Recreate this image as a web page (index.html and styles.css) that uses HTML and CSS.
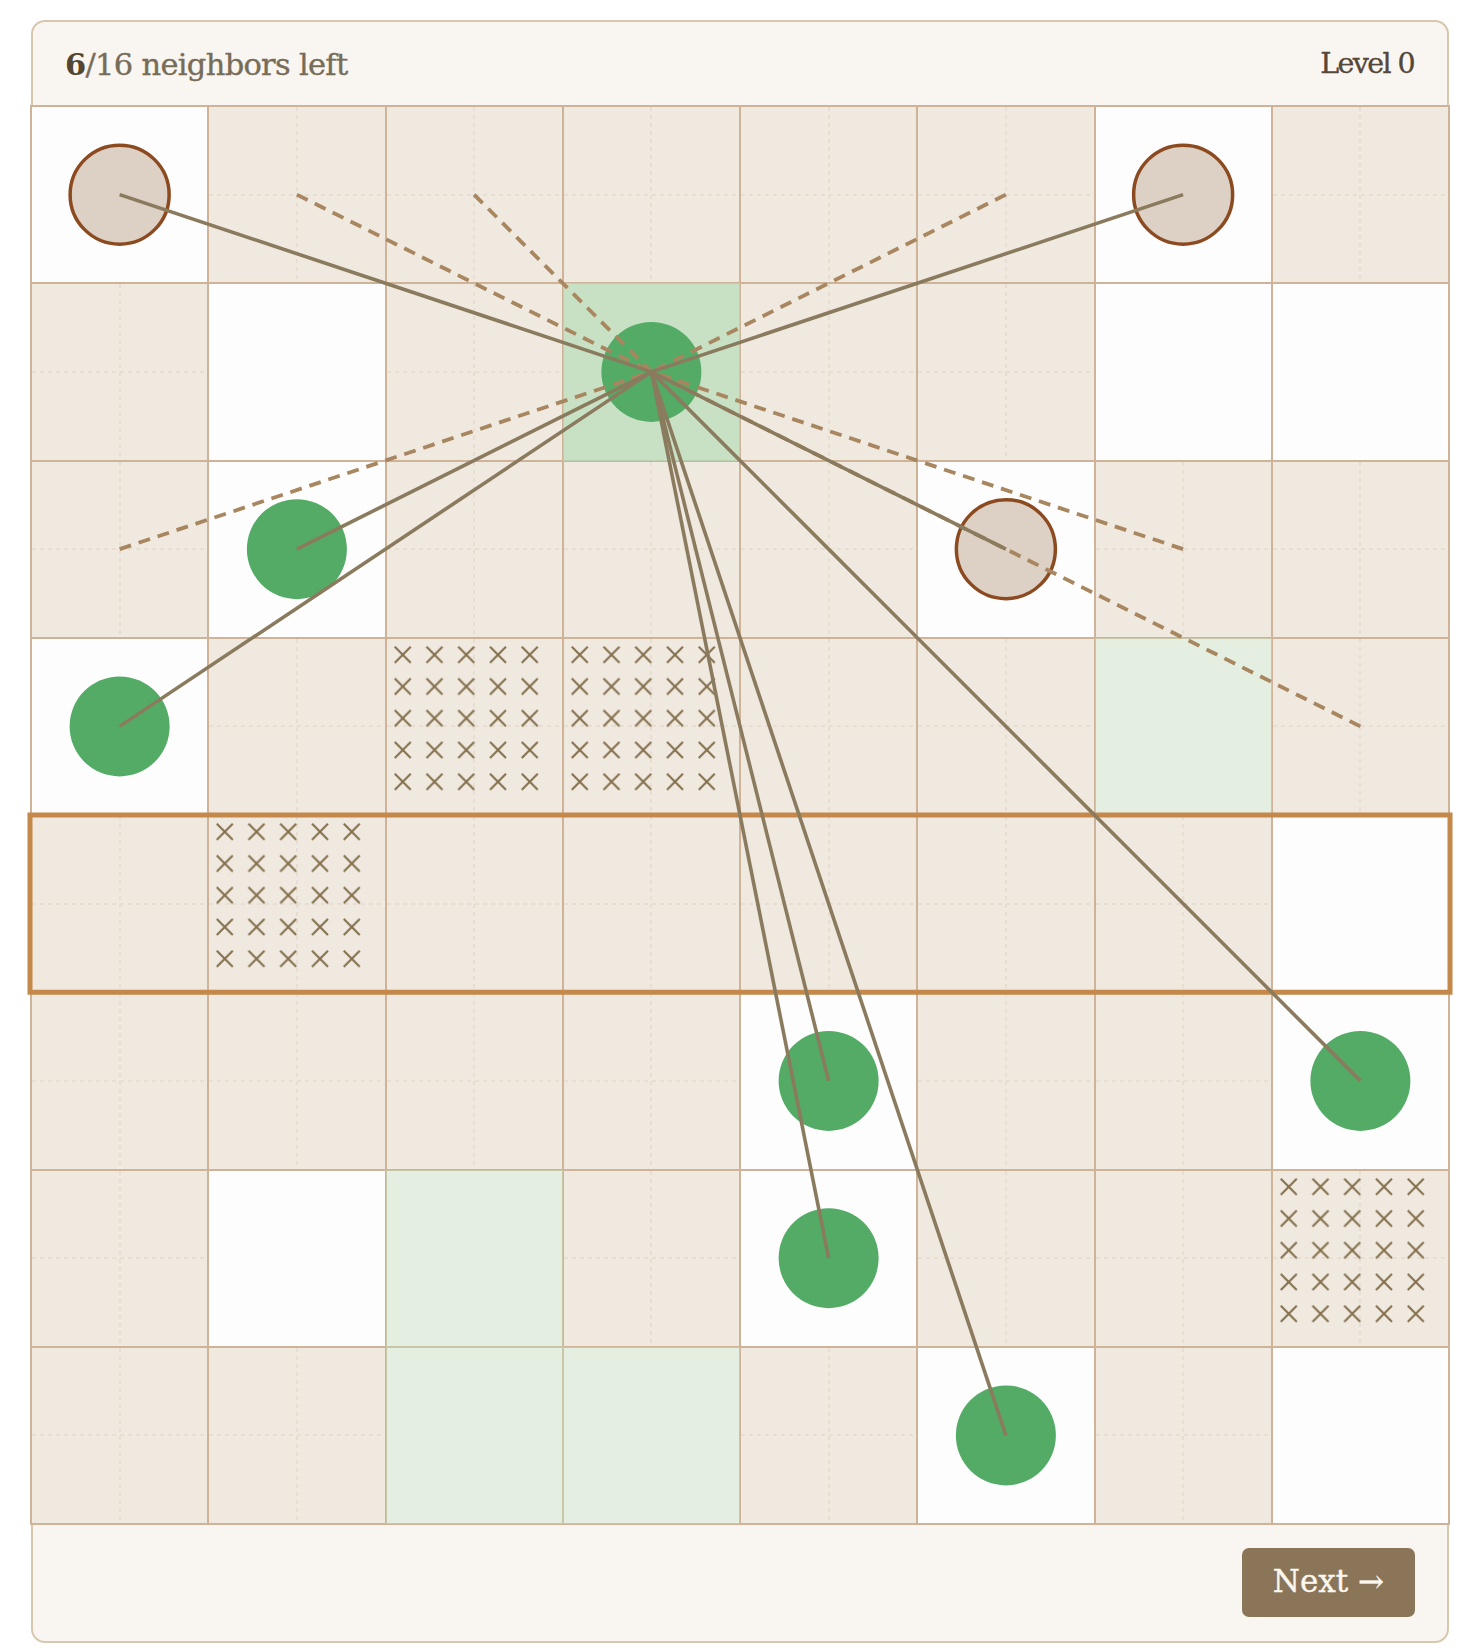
FILE: index.html
```html
<!DOCTYPE html>
<html lang="en">
<head>
<meta charset="utf-8">
<title>Neighbors</title>
<link rel="stylesheet" href="styles.css">
</head>
<body>
<svg class="defs" width="0" height="0" aria-hidden="true">
  <defs>
    <pattern id="xmark" patternUnits="userSpaceOnUse" width="31.75" height="31.75">
      <path d="M7.75 7.75 L23.75 23.75 M23.75 7.75 L7.75 23.75" stroke="#84704d" stroke-width="2.1" fill="none"/>
    </pattern>
  </defs>
</svg>
<main class="card">
  <header class="card-head">
    <div class="count"><b>6</b>/16 neighbors left</div>
    <div class="level">Level 0</div>
  </header>
  <div class="board">
    <!-- row 0 -->
    <div class="cell w"></div><div class="cell b"></div><div class="cell b"></div><div class="cell b"></div><div class="cell b"></div><div class="cell b"></div><div class="cell w"></div><div class="cell b"></div>
    <!-- row 1 -->
    <div class="cell b"></div><div class="cell w"></div><div class="cell b"></div><div class="cell g"></div><div class="cell b"></div><div class="cell b"></div><div class="cell w"></div><div class="cell w"></div>
    <!-- row 2 -->
    <div class="cell b"></div><div class="cell w"></div><div class="cell b"></div><div class="cell b"></div><div class="cell b"></div><div class="cell w"></div><div class="cell b"></div><div class="cell b"></div>
    <!-- row 3 -->
    <div class="cell w"></div><div class="cell b"></div>
    <div class="cell b x"><svg class="xs" width="160" height="160"><rect width="158.75" height="158.75" fill="url(#xmark)"/></svg></div>
    <div class="cell b x"><svg class="xs" width="160" height="160"><rect width="158.75" height="158.75" fill="url(#xmark)"/></svg></div>
    <div class="cell b"></div><div class="cell b"></div><div class="cell lg"></div><div class="cell b"></div>
    <!-- row 4 -->
    <div class="cell b"></div>
    <div class="cell b x"><svg class="xs" width="160" height="160"><rect width="158.75" height="158.75" fill="url(#xmark)"/></svg></div>
    <div class="cell b"></div><div class="cell b"></div><div class="cell b"></div><div class="cell b"></div><div class="cell b"></div><div class="cell w"></div>
    <!-- row 5 -->
    <div class="cell b"></div><div class="cell b"></div><div class="cell b"></div><div class="cell b"></div><div class="cell w"></div><div class="cell b"></div><div class="cell b"></div><div class="cell w"></div>
    <!-- row 6 -->
    <div class="cell b"></div><div class="cell w"></div><div class="cell lg"></div><div class="cell b"></div><div class="cell w"></div><div class="cell b"></div><div class="cell b"></div>
    <div class="cell b x"><svg class="xs" width="160" height="160"><rect width="158.75" height="158.75" fill="url(#xmark)"/></svg></div>
    <!-- row 7 -->
    <div class="cell b"></div><div class="cell b"></div><div class="cell lg"></div><div class="cell lg"></div><div class="cell b"></div><div class="cell w"></div><div class="cell b"></div><div class="cell w"></div>

    <svg class="overlay" viewBox="0 0 1418 1418" width="1418" height="1418">
      <rect class="hl" x="-1" y="709" width="1420" height="177.25"/>
      <g class="nb-off">
        <circle cx="88.625" cy="88.625" r="49.5"/>
        <circle cx="1152.125" cy="88.625" r="49.5"/>
        <circle cx="974.875" cy="443.125" r="49.5"/>
      </g>
      <g class="nb-on">
        <circle cx="620.375" cy="265.875" r="50"/>
        <circle cx="265.875" cy="443.125" r="50"/>
        <circle cx="88.625" cy="620.375" r="50"/>
        <circle cx="797.625" cy="974.875" r="50"/>
        <circle cx="797.625" cy="1152.125" r="50"/>
        <circle cx="974.875" cy="1329.375" r="50"/>
        <circle cx="1329.375" cy="974.875" r="50"/>
      </g>
      <g class="dash">
        <line x1="265.875" y1="88.625" x2="620.375" y2="265.875"/>
        <line x1="443.125" y1="88.625" x2="620.375" y2="265.875"/>
        <line x1="974.875" y1="88.625" x2="620.375" y2="265.875"/>
        <line x1="88.625" y1="443.125" x2="620.375" y2="265.875"/>
        <line x1="1152.125" y1="443.125" x2="620.375" y2="265.875"/>
        <line x1="1329.375" y1="620.375" x2="620.375" y2="265.875"/>
      </g>
      <g class="solid">
        <line x1="620.375" y1="265.875" x2="88.625" y2="88.625"/>
        <line x1="620.375" y1="265.875" x2="1152.125" y2="88.625"/>
        <line x1="620.375" y1="265.875" x2="974.875" y2="443.125"/>
        <line x1="620.375" y1="265.875" x2="265.875" y2="443.125"/>
        <line x1="620.375" y1="265.875" x2="88.625" y2="620.375"/>
        <line x1="620.375" y1="265.875" x2="797.625" y2="974.875"/>
        <line x1="620.375" y1="265.875" x2="797.625" y2="1152.125"/>
        <line x1="620.375" y1="265.875" x2="974.875" y2="1329.375"/>
        <line x1="620.375" y1="265.875" x2="1329.375" y2="974.875"/>
      </g>
    </svg>
  </div>
  <footer class="card-foot">
    <button class="next" type="button">Next →</button>
  </footer>
</main>
</body>
</html>
```

FILE: styles.css
```css
html, body {
  margin: 0;
  background: #ffffff;
}

body {
  padding: 20px 31px;
  font-family: "DejaVu Serif", "Liberation Serif", serif;
}

.defs {
  position: absolute;
  width: 0;
  height: 0;
  overflow: hidden;
}

.card {
  width: 1418px;
  box-sizing: border-box;
  border: 2px solid #d7c7ad;
  border-radius: 14px;
  background: #f9f6f1;
  display: flex;
  flex-direction: column;
}

.card-head {
  height: 83px;
  display: flex;
  align-items: center;
  justify-content: space-between;
  padding: 0 33px 0 32px;
}

.count {
  font-size: 30.5px;
  letter-spacing: -0.7px;
  color: #776c58;
  -webkit-text-stroke: 0.35px #776c58;
}

.count b {
  color: #54462f;
  -webkit-text-stroke: 0;
  font-weight: 700;
}

.level {
  font-size: 28.5px;
  letter-spacing: -1.6px;
  color: #54473a;
  -webkit-text-stroke: 0.35px #54473a;
}

.board {
  position: relative;
  width: 1420px;
  height: 1420px;
  margin: 0 -3px;
  box-sizing: border-box;
  border: 1px solid #ceb398;
  display: grid;
  grid-template-columns: repeat(8, 1fr);
  grid-template-rows: repeat(8, 1fr);
}

.cell {
  position: relative;
  border: 1px solid #ceb398;
  background: #f0e9e0;
}

.cell.b::before {
  content: "";
  position: absolute;
  left: 50%;
  top: 0;
  bottom: 0;
  width: 2px;
  margin-left: -1px;
  background: repeating-linear-gradient(to bottom, #e7ddd0 0 4px, transparent 4px 8px);
}

.cell.b::after {
  content: "";
  position: absolute;
  top: 50%;
  left: 0;
  right: 0;
  height: 2px;
  margin-top: -1px;
  background: repeating-linear-gradient(to right, #e7ddd0 0 4px, transparent 4px 8px);
}

.cell.w {
  background: #fdfdfd;
}

.cell.g {
  background: #c8e1c4;
  border-color: #bccfae;
}

.cell.lg {
  background: #e4efe2;
  border-color: #c9c6a8;
}

.xs {
  position: absolute;
  top: 0;
  left: 0;
  z-index: 1;
}

.overlay {
  position: absolute;
  top: 0;
  left: 0;
  overflow: visible;
  pointer-events: none;
  z-index: 2;
}

.hl {
  fill: none;
  stroke: #c4884a;
  stroke-width: 5;
}

.nb-off circle {
  fill: #ddd0c4;
  stroke: #8b4a1f;
  stroke-width: 3.5;
}

.nb-on circle {
  fill: #53ab66;
}

.dash line {
  stroke: #a8865f;
  stroke-width: 3.8;
  stroke-dasharray: 12 8;
}

.solid line {
  stroke: #8b7b5e;
  stroke-width: 3.6;
}

.card-foot {
  display: flex;
  justify-content: flex-end;
  padding: 23px 32px 24px;
}

.next {
  height: 69px;
  padding: 0 31px 4px;
  border: 0;
  border-radius: 7px;
  background: #8a7558;
  color: #fbf7ef;
  font-family: "DejaVu Serif", "Liberation Serif", serif;
  font-size: 31px;
  -webkit-text-stroke: 0.4px #fbf7ef;
  cursor: pointer;
}
```
